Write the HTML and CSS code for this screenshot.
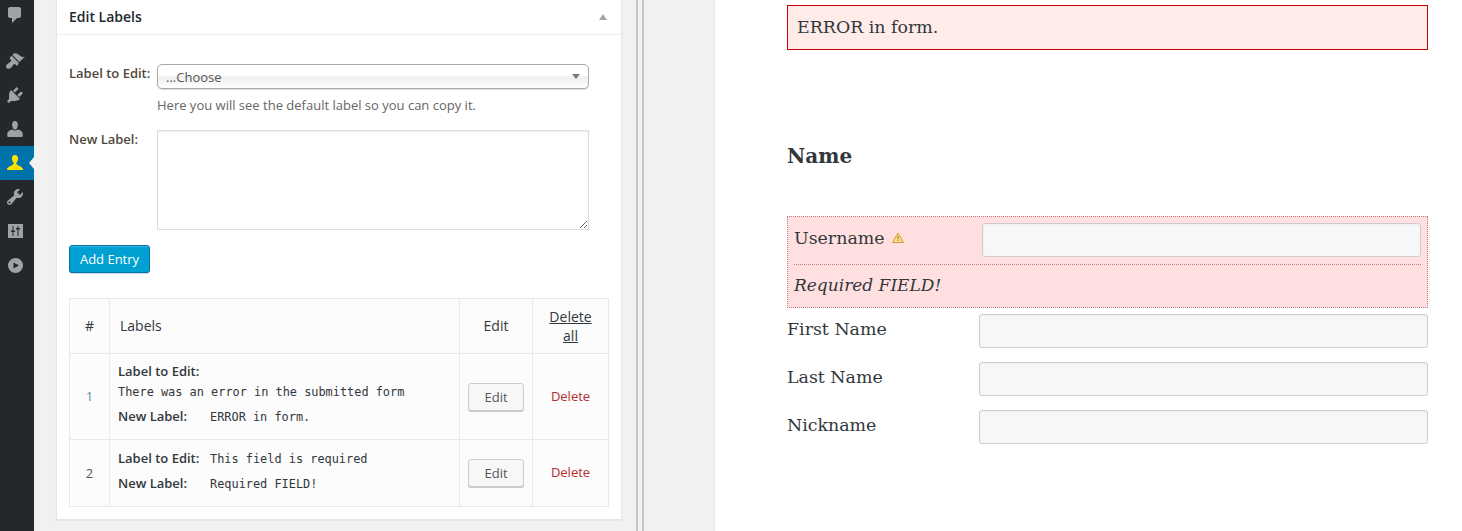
FILE: index.html
```html
<!DOCTYPE html>
<html lang="en">
<head>
<meta charset="utf-8">
<title>Edit Labels</title>
<link rel="stylesheet" href="styles.css">
</head>
<body>
<div class="page">
  <nav class="sidebar">
    <a class="menu-item menu-comments"><svg class="icon" viewBox="0 0 20 20"><path d="M5 2h9c1.100 0 2 .9 2 2v7c0 1.100-.9 2-2 2h-2l-5 5v-5H5c-1.100 0-2-.9-2-2V4c0-1.100.9-2 2-2z"/></svg></a>
    <a class="menu-item"><svg class="icon" viewBox="0 0 20 20"><path d="M14.480 11.060L7.410 3.990l1.500-1.500c.5-.56 2.300-.47 3.510.32 1.210.8 1.430 1.280 2.910 2.100 1.180.64 2.450 1.260 4.450.85zm-.71.71L6.700 4.700 4.930 6.470c-.39.39-.39 1.020 0 1.410l1.060 1.060c.39.39.39 1.030 0 1.420-.6.6-1.430 1.110-2.210 1.690-.35.26-.7.53-1.010.84C1.430 13.230.99 14.300 1 15.500c-.01.6.2 1.200.6 1.600.4.4 1 .6 1.600.6 1.200 0 2.270-.44 3.130-1.290.31-.31.58-.66.84-1.010.58-.78 1.090-1.610 1.690-2.210.39-.39 1.030-.39 1.420 0l1.060 1.060c.39.39 1.020.39 1.410 0z"/></svg></a>
    <a class="menu-item"><svg class="icon" viewBox="0 0 20 20"><path d="M13.110 4.360L9.870 7.600 8 5.730l3.240-3.240c.35-.34 1.050-.2 1.560.32.52.51.66 1.210.31 1.550zm-8 1.770l.91-1.120 9.010 9.010-1.190.84c-.71.71-2.630 1.160-3.820 1.160H6.140L4.900 17.260c-.59.59-1.540.59-2.120 0-.59-.58-.59-1.530 0-2.120l1.240-1.240v-3.880c0-1.130.4-3.190 1.090-3.890zm7.260 3.970l3.240-3.240c.34-.35 1.040-.21 1.550.31.52.51.66 1.210.31 1.550l-3.240 3.250z"/></svg></a>
    <a class="menu-item"><svg class="icon" viewBox="0 0 20 20"><path d="M10 10.500c-2.270 0-2.900-3.800-2.900-4.800C7.100 3.500 8.200 2 10 2s2.900 1.500 2.900 3.700c0 1-.63 4.800-2.900 4.800zM7.300 10.500c.7.700 1.700 1.100 2.700 1.100s2-.4 2.700-1.100c2.400.4 5 1.800 5 4.500v2.100c0 .5-.4.900-.9.900H3.200c-.5 0-.9-.4-.9-.9V15c0-2.700 2.600-4.100 5-4.500z"/></svg></a>
    <a class="menu-item is-current"><svg class="icon" viewBox="0 0 20 20"><path d="M10 2c1.900 0 3.100 1.400 3.100 3.400 0 1.500-.6 3.200-1.500 4.100-.3.300-.4.700-.3 1.100.2.700.8 1.200 1.700 1.700 1.700.8 3.800 1.700 4.800 3.100.3.500.2 1.600-.4 1.600H2.600c-.6 0-.7-1.100-.4-1.600 1-1.400 3.100-2.300 4.800-3.100.9-.5 1.500-1 1.700-1.700.1-.4 0-.8-.3-1.100-.9-.9-1.500-2.600-1.500-4.100C6.900 3.400 8.100 2 10 2z"/></svg></a>
    <a class="menu-item"><svg class="icon" viewBox="0 0 20 20"><path d="M16.680 9.770c-1.340 1.340-3.300 1.670-4.950.99l-5.410 6.520c-.99.99-2.590.99-3.580 0s-.99-2.590 0-3.570l6.520-5.420c-.68-1.650-.35-3.610.99-4.950 1.280-1.280 3.120-1.620 4.720-1.060l-2.890 2.890 2.820 2.820 2.860-2.870c.53 1.580.18 3.390-1.080 4.650zM3.810 16.210c.4.39 1.040.39 1.430 0 .4-.4.4-1.040 0-1.430-.39-.4-1.030-.4-1.430 0-.39.39-.39 1.030 0 1.430z"/></svg></a>
    <a class="menu-item"><svg class="icon" viewBox="0 0 20 20"><path fill-rule="evenodd" d="M3 3h15v14H3zM7.500 5v4.500H6V11h1.500v4h1v-4H10V9.500H8.500V5zM12.500 5v2H11v1.500h1.500V15h1V8.500H15V7h-1.500V5z"/></svg></a>
    <a class="menu-item"><svg class="icon" viewBox="0 0 20 20"><path fill-rule="evenodd" d="M10.500 3a7.500 7.500 0 1 0 0 15 7.500 7.500 0 0 0 0-15zM8.500 7.500l5.500 3-5.500 3z"/></svg></a>
  </nav>

  <main class="editor">
    <section class="panel">
      <header class="panel-head">
        <h2 class="panel-title">Edit Labels</h2>
        <span class="panel-toggle"></span>
      </header>
      <div class="panel-body">
        <div class="field">
          <label class="field-label">Label to Edit:</label>
          <div class="field-control">
            <div class="select-wrap">
              <select class="select"><option>...Choose</option></select>
            </div>
            <p class="hint">Here you will see the default label so you can copy it.</p>
          </div>
        </div>
        <div class="field field-new">
          <label class="field-label">New Label:</label>
          <div class="field-control"><textarea class="textarea"></textarea></div>
        </div>
        <button class="btn-primary" type="button">Add Entry</button>

        <table class="entries">
          <colgroup>
            <col class="col-num"><col class="col-label"><col class="col-edit"><col class="col-del">
          </colgroup>
          <thead>
            <tr>
              <th class="th-plain">#</th>
              <th class="th-plain th-labels">Labels</th>
              <th class="th-plain">Edit</th>
              <th><a class="delete-all">Delete all</a></th>
            </tr>
          </thead>
          <tbody>
            <tr class="row-one">
              <td class="num">1</td>
              <td class="entry">
                <div class="line"><b class="key">Label to Edit:</b></div>
                <div class="line line-code"><code>There was an error in the submitted form</code></div>
                <div class="line line-new"><b class="key key-fixed">New Label:</b><code>ERROR in form.</code></div>
              </td>
              <td class="center"><button class="btn" type="button">Edit</button></td>
              <td class="center"><a class="delete">Delete</a></td>
            </tr>
            <tr class="row-two">
              <td class="num">2</td>
              <td class="entry">
                <div class="line"><b class="key key-fixed">Label to Edit:</b><code>This field is required</code></div>
                <div class="line line-new"><b class="key key-fixed">New Label:</b><code>Required FIELD!</code></div>
              </td>
              <td class="center"><button class="btn" type="button">Edit</button></td>
              <td class="center cell-delete"><a class="delete">Delete</a></td>
            </tr>
          </tbody>
        </table>
      </div>
    </section>
  </main>

  <div class="splitter"></div>

  <aside class="preview-gutter"></aside>

  <section class="preview">
    <div class="form-error">ERROR in form.</div>
    <h3 class="form-heading">Name</h3>
    <div class="row-error">
      <div class="row-error-top">
        <label class="form-label form-label-error">Username <svg class="warn" viewBox="0 0 12 12"><path d="M6 1L11.500 10.500H.5z" fill="#fbe38a" stroke="#d49a3c"/><path d="M5.500 4h1v3.500h-1zM5.500 8h1v1h-1z" fill="#a8690f"/></svg></label>
        <input class="input input-error" type="text">
      </div>
      <div class="row-error-msg">Required FIELD!</div>
    </div>
    <div class="form-row"><label class="form-label">First Name</label><input class="input" type="text"></div>
    <div class="form-row"><label class="form-label">Last Name</label><input class="input" type="text"></div>
    <div class="form-row"><label class="form-label">Nickname</label><input class="input" type="text"></div>
  </section>
</div>
</body>
</html>
```

FILE: styles.css
```css
* { box-sizing: border-box; }
html, body { margin: 0; height: 531px; overflow: hidden; }
body { background: #f1f1f1; color: #444; font: 13px/1.4 "Open Sans", sans-serif; }
.page { display: flex; height: 531px; }

/* admin menu */
.sidebar { flex: 0 0 34px; background: #23282d; }
.menu-item { display: block; position: relative; height: 34px; padding: 7px 0 0 5px; }
.menu-comments { height: 46px; margin-top: -2px; }
.icon { display: block; width: 20px; height: 20px; fill: #9ea3a8; }
.is-current { background: #0073aa; }
.is-current .icon { fill: #ffe000; }
.is-current::after { content: ""; position: absolute; right: 0; top: 11px; border: 6px solid transparent; border-right-color: #f1f1f1; border-left-width: 0; border-right-width: 5px; }

/* left editor */
.editor { flex: 0 0 602px; padding-left: 22px; }
.panel { width: 566px; height: 520px; background: #fff; border: 1px solid #e5e5e5; border-top: 0; box-shadow: 0 1px 1px rgba(0,0,0,.04); }
.panel-head { display: flex; align-items: center; justify-content: space-between; height: 35px; padding: 0 12px; border-bottom: 1px solid #eee; }
.panel-title { margin: 0; font-size: 14px; font-weight: 600; color: #23282d; line-height: 34px; }
.panel-toggle { width: 0; height: 0; margin-right: 2px; border-left: 4px solid transparent; border-right: 4px solid transparent; border-bottom: 6px solid #a0a5aa; }
.panel-body { padding: 29px 12px 0; }

.field { display: flex; }
.field-label { flex: 0 0 88px; font-weight: 600; color: #50483c; line-height: 18px; }
.field-control { width: 432px; }
.select-wrap { position: relative; height: 25px; }
.select-wrap::after { content: ""; position: absolute; right: 9px; top: 10px; border: 4px solid transparent; border-top: 5px solid #777; border-bottom: 0; }
.select { display: block; width: 100%; height: 25px; padding: 0 8px; appearance: none; border: 1px solid #aaa; border-radius: 5px; box-shadow: 0 1px 1px rgba(0,0,0,.15); background: linear-gradient(#fff 0, #fff 45%, #eee 52%, #fff 100%); font: 13px "Open Sans", sans-serif; color: #555; }
.hint { margin: 7px 0 0; line-height: 18px; color: #666; font-size: 13px; }
.field-new { margin-top: 16px; }
.textarea { display: block; width: 432px; height: 100px; border: 1px solid #ddd; box-shadow: inset 0 1px 2px rgba(0,0,0,.07); background: #fff; }
.btn-primary { display: block; width: 81px; height: 28px; margin-top: 15px; padding: 0; background: #00a0d2; border: 1px solid #0073aa; border-radius: 3px; box-shadow: inset 0 1px 0 rgba(120,200,230,.5), 0 1px 0 rgba(0,0,0,.15); color: #fff; font: 13px "Open Sans", sans-serif; }

.entries { width: 539px; margin-top: 25px; table-layout: fixed; border-collapse: collapse; background: #fcfcfc; }
.col-num { width: 40px; } .col-label { width: 350px; } .col-edit { width: 73px; } .col-del { width: 76px; }
.entries th, .entries td { border: 1px solid #e9e9e9; padding: 0; vertical-align: middle; }
.entries thead tr { height: 55px; }
.entries th { font-weight: 400; font-size: 14px; line-height: 19px; color: #32373c; text-align: center; }
.entries th.th-plain { padding-bottom: 2px; }
.entries th.th-labels { text-align: left; padding-left: 10px; }
.delete-all { display: block; padding: 0 12px; text-decoration: underline; color: #32373c; }
.row-one { height: 86px; } .row-two { height: 67px; }
.num { text-align: center; color: #555; }
.row-one .num { color: #5b8aa5; }
.entries td.entry { padding: 0 8px 5px; }
.entries td.cell-delete { padding-bottom: 2px; }
.line { line-height: 18px; }
.line-code { margin-top: 2px; }
.line-new { margin-top: 6px; }
.key { font-weight: 600; color: #32373c; }
.key-fixed { display: inline-block; width: 92px; }
code { font: 11.9px/18px "DejaVu Sans Mono", monospace; color: #32373c; }
.center { text-align: center; }
.btn { width: 56px; height: 28px; padding: 0; background: #f7f7f7; border: 1px solid #ccc; border-radius: 3px; box-shadow: 0 1px 0 #ccc; color: #555; font: 13px "Open Sans", sans-serif; }
.delete { color: #b32d2e; }

/* splitter */
.splitter { flex: 0 0 8px; border-left: 2px solid #c8c8c8; border-right: 2px solid #c8c8c8; background: #f1f1f1; margin-right: -1px; }
.preview-gutter { flex: 0 0 72px; border-right: 1px solid #e5e5e5; }

/* preview */
.preview { flex: 1; background: #fff; padding: 5px 34px 0 72px; font-family: "DejaVu Serif", serif; font-size: 17.4px; color: #32373c; }
.form-error { height: 45px; padding: 0 9px; line-height: 43px; background: #ffebe8; border: 1px solid #c00; }
.form-heading { margin: 91px 0 0; font-size: 20px; line-height: 30px; font-weight: 700; color: #32373c; }
.row-error { margin-top: 45px; height: 92px; padding: 6px; background: #ffdfe0; border: 1px dotted #c08080; }
.row-error-top { display: flex; align-items: flex-start; padding-bottom: 7px; border-bottom: 1px dotted #c08080; }
.form-label { flex: 0 0 192px; }
.form-label-error { flex-basis: 188px; line-height: 30px; }
.warn { width: 12px; height: 12px; margin-left: 2px; }
.row-error-msg { font-size: 17px; font-style: italic; line-height: 41px; }
.form-row { display: flex; align-items: flex-start; margin-top: 6px; height: 42px; line-height: 30px; }
.input { flex: 1; min-width: 0; height: 34px; background: #f7f7f7; border: 1px solid #ccc; border-radius: 3px; box-shadow: inset 0 1px 2px rgba(0,0,0,.03); }
```
